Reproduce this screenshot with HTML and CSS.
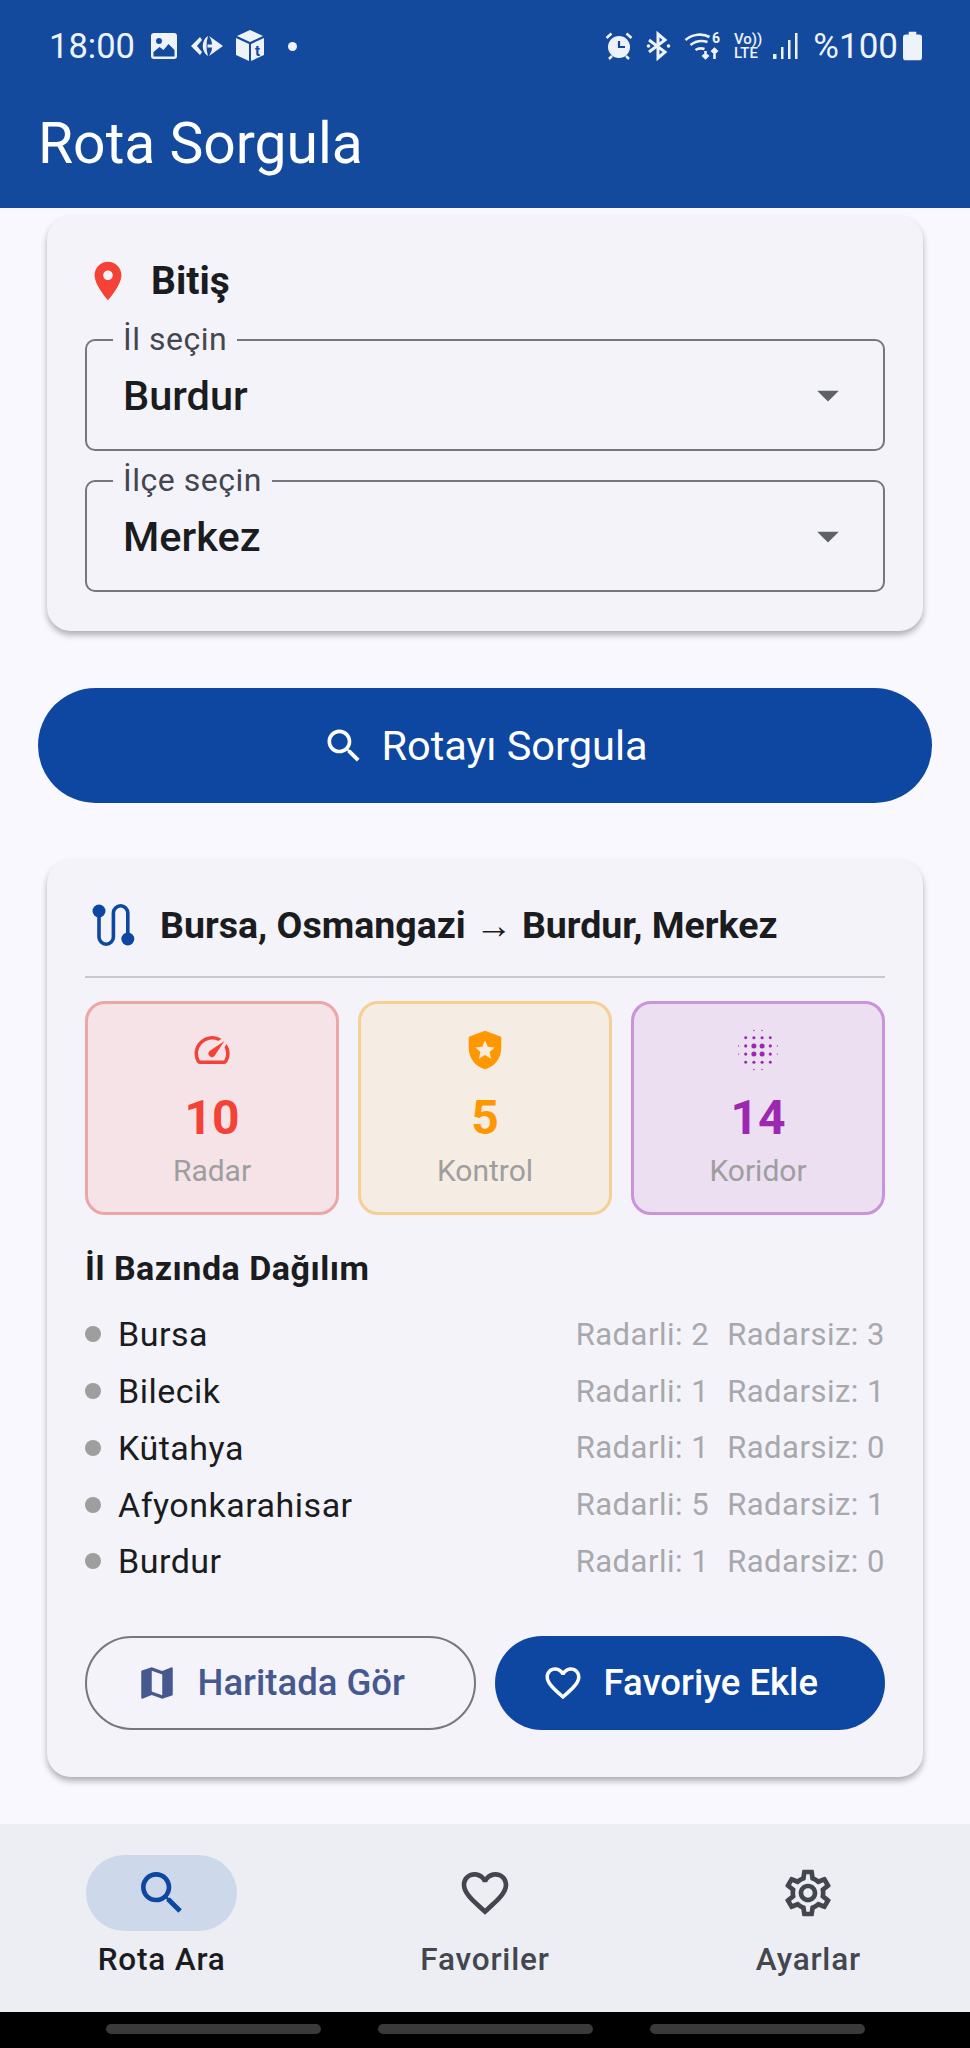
FILE: index.html
```html
<!DOCTYPE html>
<html lang="tr">
<head>
    <meta charset="UTF-8">
    <meta name="viewport" content="width=device-width, initial-scale=1.0">
    <title>Rota Sorgula</title>
    <link rel="stylesheet" href="styles.css">
</head>
<body>
    <header class="topbar">
        <div class="status">
            <div class="status-side">
                <span class="clock">18:00</span>
                <svg class="st-img" viewBox="0 0 26 26"><path fill="#eef2fa" d="M3 0h20a3 3 0 0 1 3 3v20a3 3 0 0 1-3 3H3a3 3 0 0 1-3-3V3a3 3 0 0 1 3-3z"/><circle cx="8" cy="8" r="3" fill="#134a9e"/><path fill="#134a9e" d="M2.500 19l6-5 4 3 5-6 6 6v6.500h-21z"/></svg>
                <svg class="st-car" viewBox="0 0 32 22"><path fill="#eef2fa" d="M9 2 0 11l9 9 2-3-5-6 5-6z"/><path fill="#eef2fa" d="M17 1c-7 4-7 16 0 20-2-7-2-13 0-20z"/><path fill="#eef2fa" d="M18 1l14 10-14 10c3-5 3-7 3-8.500h-4.500v-3H21c0-1.500 0-3.500-3-8.500z"/></svg>
                <svg class="st-box" viewBox="0 0 30 32"><path fill="#eef2fa" d="M15 0l13 6-13 6L2 6z"/><path fill="#eef2fa" d="M1 8l13 6v17L1 25z"/><path fill="#eef2fa" d="M16 14l13-6v17l-13 6z"/><text x="20" y="26" class="st-box-t">t</text></svg>
                <span class="st-dot"></span>
            </div>
            <div class="status-side right">
                <svg class="st-alarm" viewBox="0 0 28 28"><path fill="#eef2fa" d="M14 4a11 11 0 1 0 0 22 11 11 0 0 0 0-22z"/><path fill="none" stroke="#134a9e" stroke-width="2.200" d="M14 9v6h6"/><path fill="none" stroke="#eef2fa" stroke-width="2.500" d="M1.500 6 6.500 1.500M26.500 6l-5-4.500M4 27l3-3M24 27l-3-3"/></svg>
                <svg class="st-bt" viewBox="0 0 26 30"><path fill="none" stroke="#eef2fa" stroke-width="3" d="M3 9l16 12-7 6V3l7 6L3 21"/><circle cx="2.500" cy="15" r="1.800" fill="#eef2fa"/><circle cx="22.500" cy="15" r="1.800" fill="#eef2fa"/></svg>
                <span class="st-wifi">
                    <svg viewBox="0 0 36 28"><path fill="none" stroke="#eef2fa" stroke-width="2.600" d="M1 8c7-6 17-7 24-3M6 13c5-4 11-5 17-3M11 18c3-2 6-2 9-1"/><path fill="none" stroke="#eef2fa" stroke-width="2.600" d="M21 19v7m-3-3 3 3 3-3M30 27V17m-3 3 3-3 3 3"/></svg>
                    <span class="st-six">6</span>
                </span>
                <span class="st-volte"><span>Vo))</span><span>LTE</span></span>
                <svg class="st-signal" viewBox="0 0 26 28"><rect x="0" y="22" width="3.500" height="5" fill="#eef2fa"/><rect x="8" y="15" width="2.500" height="12" fill="#eef2fa"/><rect x="15" y="8" width="2.500" height="19" fill="#eef2fa"/><rect x="22" y="1" width="2.500" height="26" fill="#eef2fa"/></svg>
                <span class="battery-text">%100</span>
                <svg class="st-batt" viewBox="0 0 20 30"><path fill="#eef2fa" d="M6 0h8v3h3a3 3 0 0 1 3 3v21a3 3 0 0 1-3 3H3a3 3 0 0 1-3-3V6a3 3 0 0 1 3-3h3z"/></svg>
            </div>
        </div>
        <h1 class="title">Rota Sorgula</h1>
    </header>

    <main class="content">
        <section class="card end-card">
            <div class="end-head">
                <svg class="pin" viewBox="0 0 24 24"><path fill="#f44336" d="M12 2C8.130 2 5 5.130 5 9c0 5.250 7 13 7 13s7-7.750 7-13c0-3.870-3.130-7-7-7zm0 9.500c-1.380 0-2.500-1.120-2.500-2.500s1.120-2.500 2.500-2.500 2.500 1.120 2.500 2.500-1.120 2.500-2.500 2.500z"/></svg>
                <span>Bitiş</span>
            </div>
            <div class="field">
                <span class="field-label">İl seçin</span>
                <span class="field-value">Burdur</span>
                <svg class="caret" viewBox="0 0 24 24"><path fill="#5f6168" d="M7 10l5 5 5-5z"/></svg>
            </div>
            <div class="field">
                <span class="field-label">İlçe seçin</span>
                <span class="field-value">Merkez</span>
                <svg class="caret" viewBox="0 0 24 24"><path fill="#5f6168" d="M7 10l5 5 5-5z"/></svg>
            </div>
        </section>

        <button type="button" class="query-btn">
            <svg viewBox="0 0 24 24"><path fill="#fff" d="M15.500 14h-.79l-.28-.27C15.410 12.590 16 11.110 16 9.500 16 5.910 13.090 3 9.500 3S3 5.910 3 9.500 5.910 16 9.500 16c1.610 0 3.090-.59 4.230-1.570l.27.28v.79l5 4.990L20.490 19l-4.990-5zm-6 0C7.010 14 5 11.990 5 9.500S7.010 5 9.500 5 14 7.010 14 9.500 11.990 14 9.500 14z"/></svg>
            Rotayı Sorgula
        </button>

        <section class="card result-card">
            <div class="route-head">
                <svg class="route-icon" viewBox="0 0 44 44"><path fill="none" stroke="#0d47a1" stroke-width="3.600" d="M8 8v26a7.200 7.200 0 0 0 14.400 0V10a7.200 7.200 0 0 1 14.400 0v26"/><circle cx="8" cy="8" r="6.500" fill="#0d47a1"/><circle cx="36.800" cy="36" r="6.500" fill="#0d47a1"/></svg>
                <span>Bursa, Osmangazi <span class="arrow">→</span> Burdur, Merkez</span>
            </div>
            <div class="stats">
                <div class="stat stat-red">
                    <svg viewBox="0 0 24 24"><path fill="#f44336" d="M20.380 8.570l-1.230 1.850a8 8 0 0 1-.22 7.580H5.070A8 8 0 0 1 15.580 6.850l1.850-1.230A10 10 0 0 0 3.350 19a2 2 0 0 0 1.720 1h13.850a2 2 0 0 0 1.740-1 10 10 0 0 0-.27-10.440zm-9.790 6.840a2 2 0 0 0 2.830 0l5.660-8.490-8.490 5.660a2 2 0 0 0 0 2.830z"/></svg>
                    <b>10</b>
                    <span>Radar</span>
                </div>
                <div class="stat stat-orange">
                    <svg viewBox="0 0 24 24"><path fill="#ff9800" d="M12 1 3.500 4.200c-.5.2-.8.600-.8 1.100V11c0 5.500 3.900 10.700 9.300 12 5.400-1.300 9.300-6.500 9.300-12V5.300c0-.5-.3-.9-.8-1.100z"/><path fill="#f9ecdc" d="M12 6.500l1.600 3.700 4 .3-3 2.600.9 3.900-3.500-2.100-3.500 2.100.9-3.900-3-2.600 4-.3z"/></svg>
                    <b>5</b>
                    <span>Kontrol</span>
                </div>
                <div class="stat stat-purple">
                    <svg viewBox="0 0 40 40" fill="#9c27b0">
                        <circle cx="16.100" cy="16.100" r="2.400"/><circle cx="23.900" cy="16.100" r="2.400"/><circle cx="16.100" cy="23.900" r="2.400"/><circle cx="23.900" cy="23.900" r="2.400"/>
                        <circle cx="8.300" cy="16.100" r="1.500"/><circle cx="31.700" cy="16.100" r="1.500"/><circle cx="8.300" cy="23.900" r="1.500"/><circle cx="31.700" cy="23.900" r="1.500"/>
                        <circle cx="1.500" cy="16.100" r=".6"/><circle cx="38.500" cy="16.100" r=".6"/><circle cx="1.500" cy="23.900" r=".6"/><circle cx="38.500" cy="23.900" r=".6"/>
                        <circle cx="16.100" cy="8.300" r="1.500"/><circle cx="23.900" cy="8.300" r="1.500"/><circle cx="16.100" cy="31.700" r="1.500"/><circle cx="23.900" cy="31.700" r="1.500"/>
                        <circle cx="8.300" cy="8.300" r="1.400"/><circle cx="31.700" cy="8.300" r="1.400"/><circle cx="8.300" cy="31.700" r="1.400"/><circle cx="31.700" cy="31.700" r="1.400"/>
                        <circle cx="16.100" cy="1.500" r=".7"/><circle cx="23.900" cy="1.500" r=".7"/><circle cx="16.100" cy="38.500" r=".7"/><circle cx="23.900" cy="38.500" r=".7"/>
                    </svg>
                    <b>14</b>
                    <span>Koridor</span>
                </div>
            </div>
            <h2 class="dist-title">İl Bazında Dağılım</h2>
            <ul class="dist">
                <li><i></i><span class="city">Bursa</span><span class="count">Radarli: 2</span><span class="count">Radarsiz: 3</span></li>
                <li><i></i><span class="city">Bilecik</span><span class="count">Radarli: 1</span><span class="count">Radarsiz: 1</span></li>
                <li><i></i><span class="city">Kütahya</span><span class="count">Radarli: 1</span><span class="count">Radarsiz: 0</span></li>
                <li><i></i><span class="city">Afyonkarahisar</span><span class="count">Radarli: 5</span><span class="count">Radarsiz: 1</span></li>
                <li><i></i><span class="city">Burdur</span><span class="count">Radarli: 1</span><span class="count">Radarsiz: 0</span></li>
            </ul>
            <div class="actions">
                <button type="button" class="btn btn-outline">
                    <svg viewBox="0 0 24 24"><path fill="#46598f" d="M20.500 3l-.16.03L15 5.100 9 3 3.360 4.900c-.21.07-.36.25-.36.48V20.500c0 .28.22.5.5.5l.16-.03L9 18.900l6 2.100 5.640-1.900c.21-.07.36-.25.36-.48V3.500c0-.28-.22-.5-.5-.5zM15 19l-6-2.110V5l6 2.110V19z"/></svg>
                    Haritada Gör
                </button>
                <button type="button" class="btn btn-fill">
                    <svg viewBox="0 0 24 24"><path fill="#fff" d="M16.500 3c-1.740 0-3.410.81-4.500 2.090C10.910 3.810 9.240 3 7.500 3 4.420 3 2 5.420 2 8.500c0 3.780 3.400 6.860 8.550 11.540L12 21.350l1.450-1.320C18.600 15.360 22 12.280 22 8.500 22 5.420 19.580 3 16.500 3zm-4.400 15.550l-.1.1-.1-.1C7.140 14.240 4 11.390 4 8.500 4 6.500 5.500 5 7.500 5c1.540 0 3.040.99 3.570 2.360h1.870C13.460 5.990 14.960 5 16.500 5c2 0 3.500 1.500 3.500 3.500 0 2.890-3.140 5.740-7.900 10.050z"/></svg>
                    Favoriye Ekle
                </button>
            </div>
        </section>
    </main>

    <nav class="bottom-nav">
        <div class="nav-item active">
            <span class="nav-pill"><svg viewBox="0 0 24 24"><path fill="#0d47a1" d="M15.500 14h-.79l-.28-.27C15.410 12.590 16 11.110 16 9.500 16 5.910 13.090 3 9.500 3S3 5.910 3 9.500 5.910 16 9.500 16c1.610 0 3.090-.59 4.230-1.570l.27.28v.79l5 4.990L20.490 19l-4.990-5zm-6 0C7.010 14 5 11.990 5 9.500S7.010 5 9.500 5 14 7.010 14 9.500 11.990 14 9.500 14z"/></svg></span>
            <span class="nav-label">Rota Ara</span>
        </div>
        <div class="nav-item">
            <span class="nav-pill"><svg viewBox="0 0 24 24"><path fill="#44464f" d="M16.500 3c-1.740 0-3.410.81-4.500 2.090C10.910 3.810 9.240 3 7.500 3 4.420 3 2 5.420 2 8.500c0 3.780 3.400 6.860 8.550 11.540L12 21.350l1.450-1.320C18.600 15.360 22 12.280 22 8.500 22 5.420 19.580 3 16.500 3zm-4.400 15.550l-.1.1-.1-.1C7.140 14.240 4 11.390 4 8.500 4 6.500 5.500 5 7.500 5c1.540 0 3.040.99 3.570 2.360h1.870C13.460 5.990 14.960 5 16.500 5c2 0 3.500 1.500 3.500 3.500 0 2.890-3.140 5.740-7.900 10.050z"/></svg></span>
            <span class="nav-label">Favoriler</span>
        </div>
        <div class="nav-item">
            <span class="nav-pill"><svg viewBox="0 0 24 24"><path fill="#44464f" d="M19.430 12.980c.04-.32.07-.64.07-.98 0-.34-.03-.66-.07-.98l2.110-1.650c.19-.15.24-.42.12-.64l-2-3.460c-.09-.16-.26-.25-.44-.25-.06 0-.12.01-.17.03l-2.490 1c-.52-.4-1.080-.73-1.690-.98l-.38-2.650C14.460 2.180 14.250 2 14 2h-4c-.25 0-.46.18-.49.42l-.38 2.650c-.61.25-1.170.59-1.690.98l-2.490-1c-.06-.02-.12-.03-.18-.03-.17 0-.34.09-.43.25l-2 3.460c-.13.22-.07.49.12.64l2.110 1.650c-.04.32-.07.65-.07.98 0 .33.03.66.07.98l-2.110 1.650c-.19.15-.24.42-.12.64l2 3.460c.09.16.26.25.44.25.06 0 .12-.01.17-.03l2.490-1c.52.4 1.080.73 1.690.98l.38 2.650c.03.24.24.42.49.42h4c.25 0 .46-.18.49-.42l.38-2.650c.61-.25 1.170-.59 1.690-.98l2.490 1c.06.02.12.03.18.03.17 0 .34-.09.43-.25l2-3.460c.12-.22.07-.49-.12-.64l-2.110-1.650zm-1.980-1.710c.04.31.05.52.05.73 0 .21-.02.43-.05.73l-.14 1.130.89.7 1.080.84-.7 1.210-1.270-.51-1.040-.42-.9.68c-.43.32-.84.56-1.250.73l-1.060.43-.16 1.130-.2 1.350h-1.400l-.19-1.350-.16-1.130-1.060-.43c-.43-.18-.83-.41-1.230-.71l-.91-.7-1.060.43-1.270.51-.7-1.210 1.080-.84.89-.7-.14-1.130c-.03-.31-.05-.54-.05-.74s.02-.43.05-.73l.14-1.130-.89-.7-1.080-.84.7-1.210 1.270.51 1.040.42.9-.68c.43-.32.84-.56 1.250-.73l1.060-.43.16-1.130.2-1.350h1.390l.19 1.350.16 1.130 1.060.43c.43.18.83.41 1.230.71l.91.7 1.060-.43 1.270-.51.7 1.210-1.070.85-.89.7.14 1.130zM12 8c-2.210 0-4 1.790-4 4s1.790 4 4 4 4-1.790 4-4-1.790-4-4-4zm0 6c-1.100 0-2-.9-2-2s.9-2 2-2 2 .9 2 2-.9 2-2 2z"/></svg></span>
            <span class="nav-label">Ayarlar</span>
        </div>
    </nav>

    <div class="gesture-bar"><span></span><span></span><span></span></div>
</body>
</html>
```

FILE: styles.css
```css
* {
    box-sizing: border-box;
}
html, body {
    margin: 0;
    padding: 0;
}
body {
    width: 970px;
    height: 2048px;
    display: flex;
    flex-direction: column;
    overflow: hidden;
    font-family: Roboto, "Noto Sans", sans-serif;
    color: #1a1c20;
    background-color: #faf8ff;
}

/* top bar */
.topbar {
    height: 208px;
    padding: 22px 48px 0 38px;
    background-color: #134a9e;
    color: #fff;
}
.status {
    display: flex;
    justify-content: space-between;
    align-items: center;
    height: 48px;
    padding-left: 11px;
    color: #eef2fa;
}
.status-side {
    display: flex;
    align-items: center;
}
.clock {
    font-size: 34.500px;
    margin-right: 16px;
}
.st-img { width: 26px; height: 26px; margin-right: 14px; }
.st-car { width: 32px; height: 22px; margin-right: 12px; }
.st-box { width: 30px; height: 32px; }
.st-box-t { font-size: 15px; font-weight: 700; fill: #134a9e; }
.st-dot {
    width: 9px;
    height: 9px;
    margin-left: 23px;
    border-radius: 50%;
    background-color: #eef2fa;
}
.st-alarm { width: 28px; height: 28px; margin-right: 13px; }
.st-bt { width: 26px; height: 30px; margin-right: 12px; }
.st-wifi { position: relative; width: 37px; height: 28px; margin-right: 13px; }
.st-wifi svg { width: 37px; height: 28px; display: block; }
.st-six {
    position: absolute;
    top: -2px;
    right: 1px;
    font-size: 14px;
    font-weight: 700;
    line-height: 16px;
}
.st-volte {
    display: flex;
    flex-direction: column;
    margin-right: 11px;
    font-size: 15px;
    font-weight: 500;
    line-height: 14px;
}
.st-signal { width: 26px; height: 28px; margin-right: 14px; }
.battery-text { font-size: 35px; margin-right: 5px; }
.st-batt { width: 19px; height: 30px; }
.title {
    margin: 42px 0 0;
    font-size: 57px;
    font-weight: 400;
    line-height: 64px;
}

/* content */
.content {
    flex: 1;
    padding: 8px 38px 0;
    overflow: hidden;
}
.card {
    margin: 0 9px;
    padding: 0 38px;
    border-radius: 24px;
    background-color: #f4f3fa;
    box-shadow: 0 4px 6px rgba(0, 0, 0, 0.3);
}
.end-card {
    height: 415px;
    padding-top: 40px;
}
.end-head {
    display: flex;
    align-items: center;
    height: 50px;
    margin-bottom: 33px;
    font-size: 39px;
    font-weight: 700;
}
.pin {
    width: 46px;
    height: 46px;
    margin-right: 20px;
}
.field {
    position: relative;
    display: flex;
    align-items: center;
    justify-content: space-between;
    height: 112px;
    margin-bottom: 29px;
    padding: 0 29px 0 36px;
    border: 2px solid #74777f;
    border-radius: 10px;
}
.field-label {
    position: absolute;
    top: -19px;
    left: 26px;
    padding: 0 10px;
    background-color: #f4f3fa;
    color: #44464f;
    font-size: 32px;
    letter-spacing: 0.5px;
    line-height: 34px;
}
.field-value {
    font-size: 41.500px;
    font-weight: 500;
}
.caret {
    width: 52px;
    height: 52px;
}

.query-btn {
    display: flex;
    align-items: center;
    justify-content: center;
    width: 894px;
    height: 115px;
    margin-top: 57px;
    border: none;
    border-radius: 58px;
    background-color: #0d47a1;
    color: #fff;
    font-family: inherit;
    font-size: 41.500px;
    cursor: pointer;
}
.query-btn svg {
    width: 44px;
    height: 44px;
    margin-right: 15px;
}

.result-card {
    height: 917px;
    margin-top: 57px;
    padding-top: 36px;
}
.route-head {
    display: flex;
    align-items: center;
    height: 82px;
    padding-bottom: 23px;
    border-bottom: 2px solid #c8c8d0;
    font-size: 37.500px;
    font-weight: 700;
}
.route-icon {
    width: 44px;
    height: 44px;
    margin-right: 25px;
    margin-left: 6px;
}
.arrow {
    font-weight: 400;
}
.stats {
    display: grid;
    grid-template-columns: repeat(3, 1fr);
    gap: 19px;
    margin-top: 23px;
}
.stat {
    display: flex;
    flex-direction: column;
    align-items: center;
    height: 214px;
    padding-top: 25px;
    border: 3px solid;
    border-radius: 20px;
}
.stat svg {
    width: 42px;
    height: 42px;
}
.stat b {
    margin-top: 19px;
    font-size: 48px;
    line-height: 56px;
}
.stat span {
    margin-top: 8px;
    color: #9e9e9e;
    font-size: 30px;
    line-height: 34px;
}
.stat-red { background-color: #f5e3e8; border-color: #eda6a8; color: #f44336; }
.stat-orange { background-color: #f5ece4; border-color: #f6cf94; color: #ff9800; }
.stat-purple { background-color: #ecdff2; border-color: #c994d8; color: #9c27b0; }

.dist-title {
    margin: 34px 0 0;
    font-size: 34px;
    font-weight: 700;
    letter-spacing: 0.5px;
    line-height: 38px;
}
.dist {
    margin: 19px 0 0;
    padding: 0;
    list-style: none;
}
.dist li {
    display: flex;
    align-items: center;
    height: 56.750px;
}
.dist i {
    width: 16px;
    height: 16px;
    margin-right: 17px;
    border-radius: 50%;
    background-color: #9e9e9e;
}
.city {
    flex: 1;
    font-size: 34px;
    letter-spacing: 0.5px;
}
.count {
    margin-left: 18px;
    color: #a8a8ac;
    font-size: 31px;
    letter-spacing: 0.5px;
}

.actions {
    display: grid;
    grid-template-columns: repeat(2, 1fr);
    gap: 19px;
    margin-top: 46px;
}
.btn {
    display: flex;
    align-items: center;
    justify-content: center;
    height: 94px;
    padding: 0 20px 0 0;
    border-radius: 47px;
    font-family: inherit;
    font-size: 36.500px;
    font-weight: 500;
    cursor: pointer;
}
.btn svg {
    width: 42px;
    height: 42px;
    margin-right: 20px;
}
.btn-outline {
    border: 2px solid #74777f;
    background: transparent;
    color: #46598f;
}
.btn-fill {
    border: none;
    background-color: #0d47a1;
    color: #fff;
}

/* bottom nav */
.bottom-nav {
    display: grid;
    grid-template-columns: repeat(3, 1fr);
    height: 188px;
    padding: 31px 0 0;
    background-color: #edeef4;
}
.nav-item {
    display: flex;
    flex-direction: column;
    align-items: center;
}
.nav-pill {
    display: flex;
    align-items: center;
    justify-content: center;
    width: 151px;
    height: 76px;
    border-radius: 38px;
}
.active .nav-pill {
    background-color: #cdd8eb;
}
.nav-pill svg {
    width: 56px;
    height: 56px;
}
.nav-label {
    margin-top: 11px;
    color: #44464f;
    font-size: 31.500px;
    font-weight: 500;
    letter-spacing: 0.8px;
    line-height: 36px;
}
.active .nav-label {
    color: #1a1c20;
}

.gesture-bar {
    display: flex;
    justify-content: center;
    gap: 57px;
    height: 36px;
    padding-top: 12px;
    background-color: #000;
}
.gesture-bar span {
    width: 215px;
    height: 10px;
    border-radius: 5px;
    background-color: #3a3a3a;
}
```
